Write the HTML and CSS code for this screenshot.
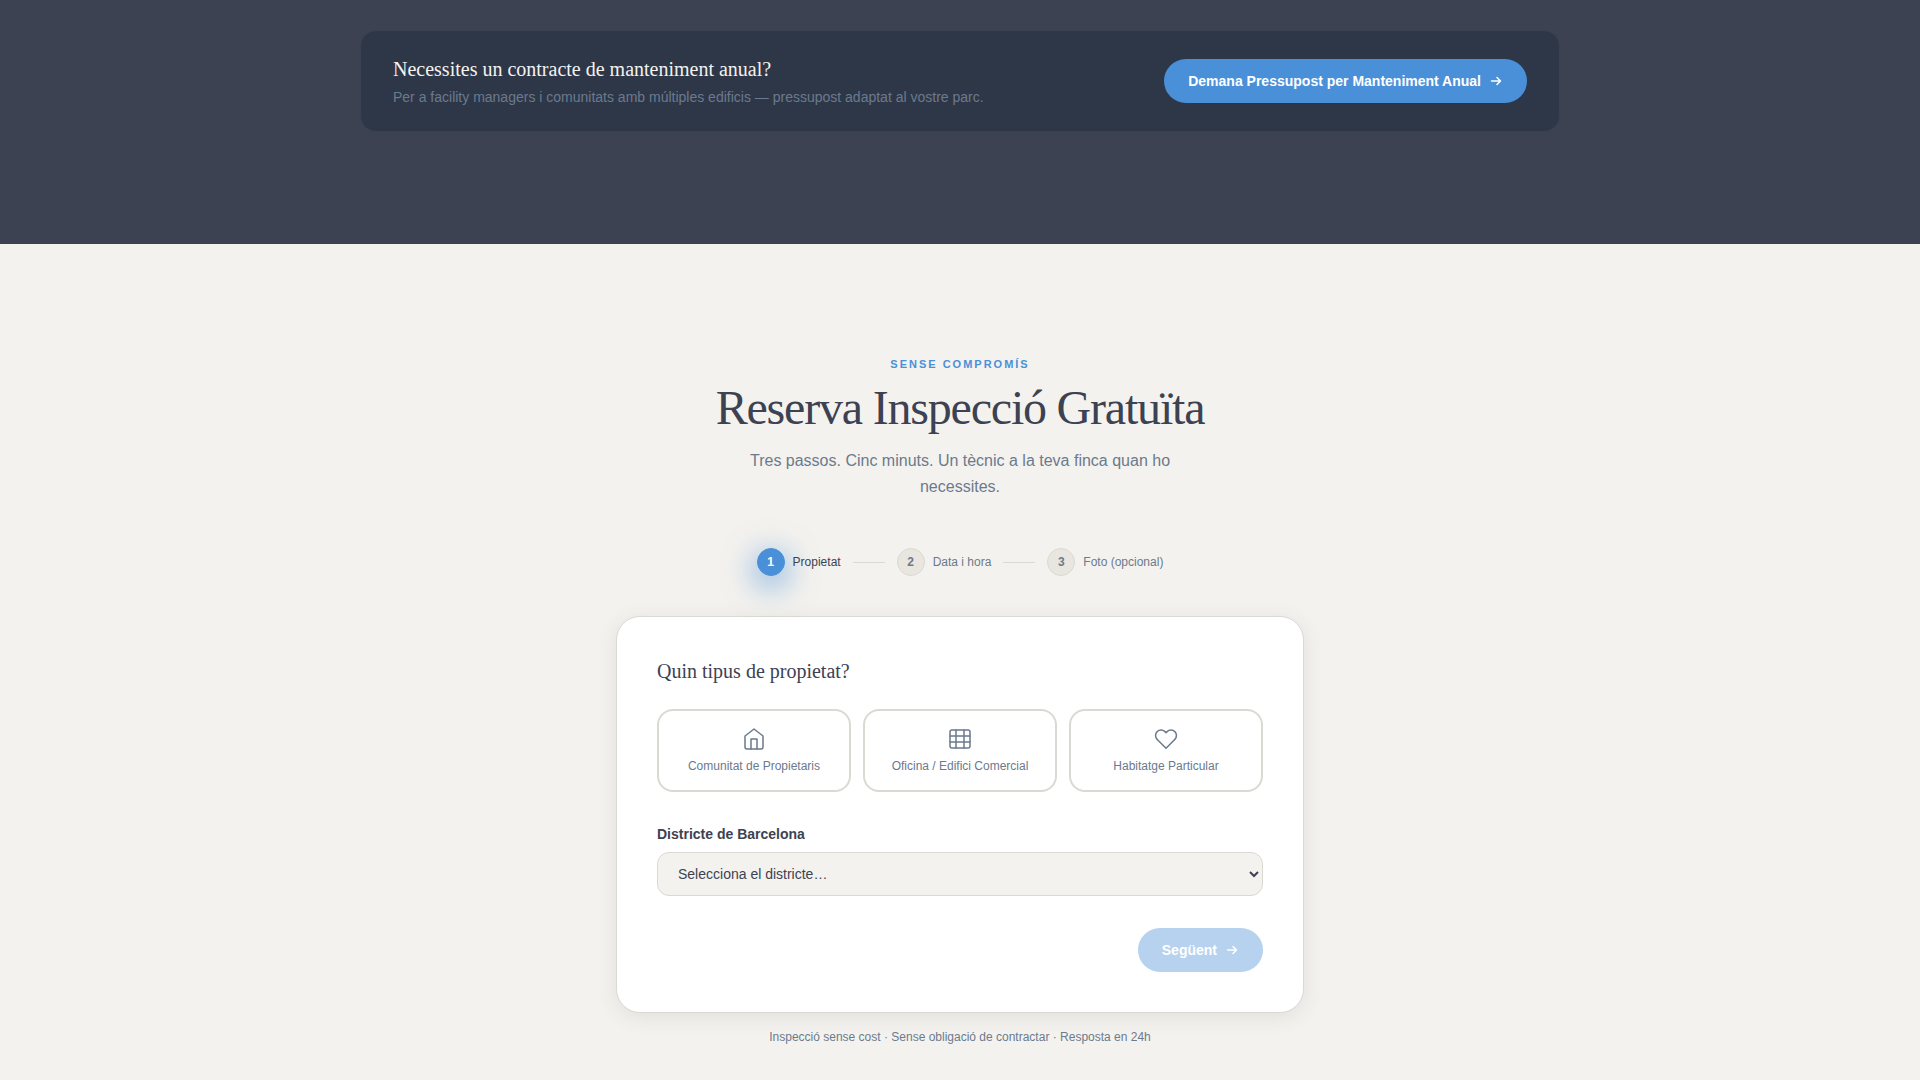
FILE: index.html
```html
<!DOCTYPE html>
<html lang="ca">
<head>
  <meta charset="UTF-8" />
  <title>Reserva Inspecció Gratuïta</title>
  <meta name="viewport" content="width=device-width, initial-scale=1" />
  <link rel="stylesheet" href="styles.css">
</head>
<body>
  <section class="maintenance">
    <div class="banner">
      <div class="banner-text">
        <h3>Necessites un contracte de manteniment anual?</h3>
        <p>Per a facility managers i comunitats amb múltiples edificis — pressupost adaptat al vostre parc.</p>
      </div>
      <a href="#reserva" class="btn">
        Demana Pressupost per Manteniment Anual
        <svg class="arrow" viewBox="0 0 14 14" aria-hidden="true"><path d="M2.5 7h9M8 3.5L11.5 7 8 10.5"/></svg>
      </a>
    </div>
  </section>

  <section class="booking" id="reserva">
    <header class="booking-header">
      <span class="eyebrow">Sense compromís</span>
      <h2>Reserva Inspecció Gratuïta</h2>
      <p>Tres passos. Cinc minuts. Un tècnic a la teva finca quan ho necessites.</p>
    </header>

    <ol class="steps">
      <li class="step active"><span class="dot">1</span>Propietat</li>
      <li class="step-line" aria-hidden="true"></li>
      <li class="step"><span class="dot">2</span>Data i hora</li>
      <li class="step-line" aria-hidden="true"></li>
      <li class="step"><span class="dot">3</span>Foto (opcional)</li>
    </ol>

    <form class="card">
      <h3>Quin tipus de propietat?</h3>
      <div class="options">
        <button type="button" class="option">
          <svg viewBox="0 0 24 24" aria-hidden="true"><path d="M3 9l9-7 9 7v11a2 2 0 0 1-2 2H5a2 2 0 0 1-2-2z"/><path d="M9 22V12h6v10"/></svg>
          <span>Comunitat de Propietaris</span>
        </button>
        <button type="button" class="option">
          <svg viewBox="0 0 24 24" aria-hidden="true"><rect x="2" y="3" width="20" height="18" rx="2"/><path d="M8 3v18M16 3v18M2 9h20M2 15h20"/></svg>
          <span>Oficina / Edifici Comercial</span>
        </button>
        <button type="button" class="option">
          <svg viewBox="0 0 24 24" aria-hidden="true"><path d="M20.84 4.61a5.5 5.5 0 0 0-7.78 0L12 5.67l-1.06-1.06a5.5 5.5 0 0 0-7.78 7.78l1.06 1.06L12 21.23l7.78-7.78 1.06-1.06a5.5 5.5 0 0 0 0-7.78z"/></svg>
          <span>Habitatge Particular</span>
        </button>
      </div>

      <label for="district">Districte de Barcelona</label>
      <select id="district">
        <option>Selecciona el districte…</option>
      </select>

      <div class="actions">
        <button type="button" class="btn" disabled>
          Següent
          <svg class="arrow" viewBox="0 0 14 14" aria-hidden="true"><path d="M2.5 7h9M8 3.5L11.5 7 8 10.5"/></svg>
        </button>
      </div>
    </form>

    <p class="note">Inspecció sense cost · Sense obligació de contractar · Resposta en 24h</p>
  </section>
</body>
</html>
```
FILE: styles.css
```css
:root{
  --slate:#3d4252;
  --navy:#2e3748;
  --blue:#4a90d9;
  --grey:#6b7a8d;
  --cream:#f4f2ee;
  --line:#dad9d3;
  --serif:"Liberation Serif",serif;
  --sans:"Liberation Sans",sans-serif;
}
*{box-sizing:border-box;margin:0;padding:0;}
body{
  background:var(--cream);color:var(--slate);
  font-family:var(--sans);font-size:16px;line-height:26px;
}
h2,h3{font-family:var(--serif);font-weight:400;}

/* Banner */
.maintenance{background:var(--slate);padding:30px 24px 112px;}
.banner{
  display:flex;justify-content:space-between;align-items:center;gap:24px;
  max-width:1200px;margin:0 auto;padding:24px 32px;
  background:var(--navy);border:1px solid #3a4151;border-radius:16px;
}
.banner h3{font-size:20px;line-height:28px;color:var(--cream);margin-bottom:4px;}
.banner p{font-size:14px;line-height:20px;color:var(--grey);}

.btn{
  display:inline-flex;align-items:center;gap:8px;
  height:44px;padding:0 24px;border:none;border-radius:22px;
  background:var(--blue);color:#fff;white-space:nowrap;
  font-family:var(--sans);font-size:14px;font-weight:700;
  text-decoration:none;cursor:pointer;
}
.btn:disabled{opacity:.4;cursor:not-allowed;}
.arrow{
  width:14px;height:14px;fill:none;stroke:currentColor;stroke-width:1.5;
  stroke-linecap:round;stroke-linejoin:round;
}

/* Booking */
.booking{padding:112px 24px 24px;}
.booking-header{max-width:500px;margin:0 auto 48px;text-align:center;}
.eyebrow{
  display:block;font-size:11px;line-height:16px;font-weight:700;
  letter-spacing:2px;text-transform:uppercase;color:var(--blue);margin-bottom:8px;
}
.booking-header h2{font-size:48px;line-height:56px;letter-spacing:-0.025em;margin-bottom:12px;}
.booking-header p{max-width:440px;margin:0 auto;color:var(--grey);}

.steps{display:flex;justify-content:center;align-items:center;gap:12px;list-style:none;margin-bottom:40px;}
.step{display:flex;align-items:center;gap:8px;font-size:12px;color:var(--grey);}
.step.active{color:var(--slate);}
.step-line{width:32px;height:1px;background:var(--line);}
.dot{
  display:flex;align-items:center;justify-content:center;
  width:28px;height:28px;border:1px solid var(--line);border-radius:50%;
  background:#e8e6df;font-weight:700;
}
.active .dot{
  background:var(--blue);border-color:var(--blue);color:#fff;
  box-shadow:0 8px 32px 2px rgba(74,144,217,.8);
}

.card{
  max-width:688px;margin:0 auto;padding:40px;
  background:#fff;border:1px solid var(--line);border-radius:24px;
  box-shadow:0 4px 20px rgba(61,66,82,.1);
}
.card h3{font-size:20px;line-height:28px;margin-bottom:24px;}
.options{display:grid;grid-template-columns:repeat(3,1fr);gap:12px;margin-bottom:32px;}
.option{
  display:flex;flex-direction:column;align-items:center;gap:8px;
  padding:16px 12px;border:2px solid var(--line);border-radius:16px;
  background:#fff;color:var(--grey);font-family:var(--sans);font-size:12px;line-height:15px;cursor:pointer;
}
.option svg{width:24px;height:24px;fill:none;stroke:currentColor;stroke-width:1.5;stroke-linecap:round;stroke-linejoin:round;}
.card label{display:block;font-size:14px;line-height:20px;font-weight:700;margin-bottom:8px;}
.card select{
  width:100%;height:44px;padding:0 16px;
  background:var(--cream);border:1px solid var(--line);border-radius:12px;
  color:var(--slate);font-family:var(--sans);font-size:14px;
}
.actions{display:flex;justify-content:flex-end;margin-top:32px;}
.note{margin-top:14px;text-align:center;font-size:12px;line-height:20px;color:var(--grey);}
```
